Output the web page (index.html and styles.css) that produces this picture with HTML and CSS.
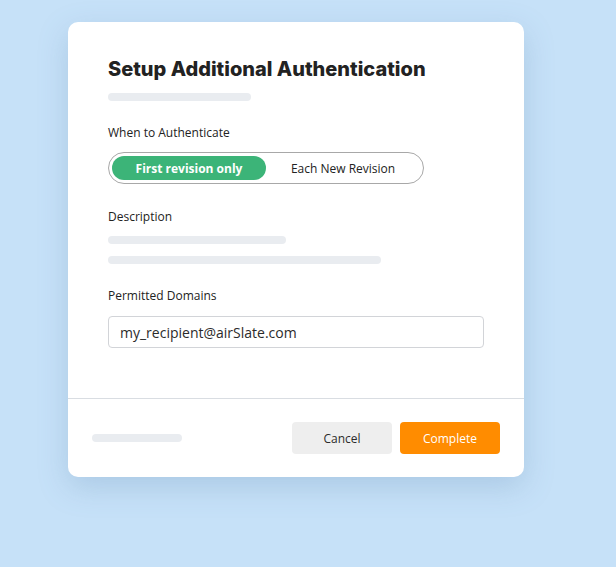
FILE: index.html
```html
<!DOCTYPE html>
<html>
<head>
<meta charset="utf-8">
<link rel="stylesheet" href="styles.css">
</head>
<body>
<div class="card">
  <div class="content">
    <h1 class="title">Setup Additional Authentication</h1>
    <div class="skel skel-title"></div>
    <div class="label label-first">When to Authenticate</div>
    <div class="toggle">
      <div class="opt opt-active">First revision only</div>
      <div class="opt">Each New Revision</div>
    </div>
    <div class="label label-desc">Description</div>
    <div class="skel skel-d1"></div>
    <div class="skel skel-d2"></div>
    <div class="label label-dom">Permitted Domains</div>
    <div class="input">my_recipient@airSlate.com</div>
  </div>
  <div class="footer">
    <div class="skel skel-foot"></div>
    <div class="actions">
      <button class="btn btn-cancel">Cancel</button>
      <button class="btn btn-primary">Complete</button>
    </div>
  </div>
</div>
</body>
</html>
```
FILE: styles.css
```css
* { box-sizing: border-box; }
html, body { margin: 0; padding: 0; }
body {
  background: #c6e1f8;
  width: 616px;
  height: 567px;
  overflow: hidden;
  font-family: "Open Sans", "Liberation Sans", sans-serif;
  color: #2b2b2b;
}
.card {
  margin: 22px 0 0 68px;
  width: 456px;
  height: 455px;
  background: #fff;
  border-radius: 10px;
  box-shadow: 0 10px 30px rgba(90, 130, 170, 0.25);
  display: flex;
  flex-direction: column;
}
.content {
  padding: 35px 40px 0 40px;
  height: 377px;
  border-bottom: 1px solid #d9dde2;
}
.title {
  margin: 0;
  font-family: "Inter", "Liberation Sans", sans-serif;
  font-weight: 800;
  font-size: 20px;
  line-height: 24px;
  color: #222;
}
.skel {
  height: 8px;
  border-radius: 4px;
  background: #e9ecf0;
}
.skel-title { width: 143px; margin-top: 12px; }
.label {
  font-size: 12px;
  line-height: 16px;
  font-weight: 500;
  color: #222;
}
.label-first { margin-top: 24px; }
.toggle {
  margin-top: 11px;
  width: 316px;
  height: 32px;
  border: 1px solid #a8a8a8;
  border-radius: 16px;
  padding: 3px;
  display: flex;
}
.opt {
  flex: 1;
  display: flex;
  align-items: center;
  justify-content: center;
  font-size: 12px;
  font-weight: 500;
  color: #222;
}
.opt-active {
  flex: 0 0 154px;
  background: #3cb478;
  color: #fff;
  font-weight: 700;
  border-radius: 12px;
}
.label-desc { margin-top: 25px; }
.skel-d1 { width: 178px; margin-top: 11px; }
.skel-d2 { width: 273px; margin-top: 12px; }
.label-dom { margin-top: 24px; }
.input {
  margin-top: 12px;
  width: 376px;
  height: 32px;
  border: 1px solid #d2d4d8;
  border-radius: 4px;
  padding: 0 11px;
  display: flex;
  align-items: center;
  font-size: 14px;
  color: #2b2b2b;
}
.footer {
  flex: 1;
  display: flex;
  align-items: center;
  justify-content: space-between;
  padding: 0 24px;
}
.skel-foot { width: 90px; }
.actions { display: flex; gap: 8px; }
.btn {
  width: 100px;
  height: 32px;
  border: none;
  border-radius: 4px;
  font-family: "Open Sans", "Liberation Sans", sans-serif;
  font-size: 12px;
  padding: 0;
}
.btn-cancel { background: #eeeeee; color: #2b2b2b; }
.btn-primary { background: #ff8c00; color: #fff; }
```
